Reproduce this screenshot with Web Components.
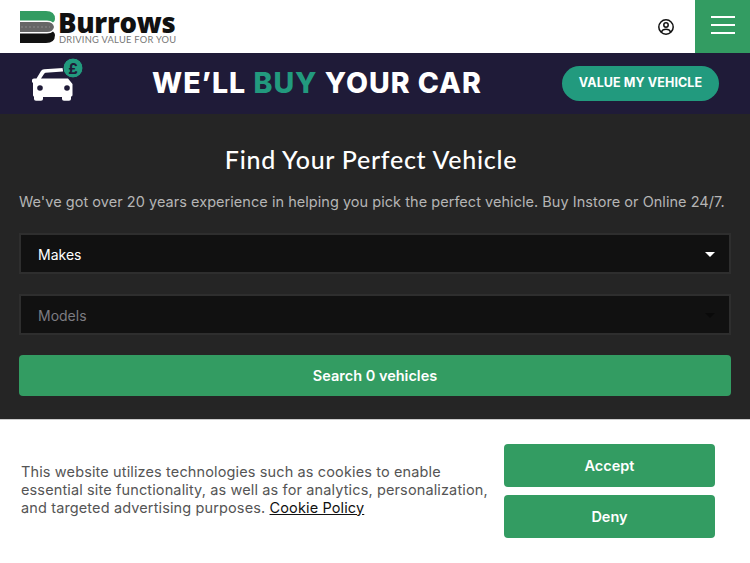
<!DOCTYPE html>
<html lang="en">
<head>
<meta charset="utf-8">
<title>Burrows</title>
<style>
  html, body { margin: 0; padding: 0; height: 100%; overflow: hidden; background: #252525; }
  body { font-family: "Inter", "Liberation Sans", sans-serif; }
  promo-banner b { color: #229a7e; font-weight: inherit; }
</style>
</head>
<body>
<site-header></site-header>
<promo-banner>
  <span>WE’LL <b>BUY</b> YOUR CAR</span>
</promo-banner>
<vehicle-search>
  <h1 slot="title">Find Your Perfect Vehicle</h1>
  <p slot="intro">We've got over 20 years experience in helping you pick the perfect vehicle. Buy Instore or Online 24/7.</p>
  <fake-select>Makes</fake-select>
  <fake-select disabled>Models</fake-select>
  <span slot="button">Search 0 vehicles</span>
</vehicle-search>
<cookie-bar>
  This website utilizes technologies such as cookies to enable essential site functionality, as well as for analytics, personalization, and targeted advertising purposes. <a href="#">Cookie Policy</a>
</cookie-bar>

<script>
class SiteHeader extends HTMLElement {
  constructor() {
    super();
    this.attachShadow({ mode: "open" });
  }
  connectedCallback() {
    this.shadowRoot.innerHTML = `
      <style>
        :host { display: flex; height: 53px; background: #fff; align-items: stretch; }
        .logo { display: flex; gap: 3px; padding: 11px 0 0 20px; flex: 1; }
        .words { display: flex; flex-direction: column; }
        .name { font: 800 27.500px/23px "Open Sans", sans-serif; color: #111; letter-spacing: -0.3px; }
        .tag { font: 400 9.300px/9px "Lato", sans-serif; color: #777; letter-spacing: .27px; margin: 1px 0 0 1px; }
        .user { display: flex; align-items: center; padding-right: 21px; }
        .menu { width: 55px; box-sizing: border-box; padding-bottom: 3px; background: #339c62; display: flex; flex-direction: column; gap: 6px; align-items: center; justify-content: center; }
        .menu i { display: block; width: 24px; height: 2px; background: #fff; }
      </style>
      <div class="logo">
        <svg width="35" height="32" viewBox="0 0 35 32">
          <path d="M0 0H26Q35 0 35 8Q35 10 33 11.500Q31 9.500 27 9.500H0Z" fill="#339c62"/>
          <path d="M0 11H27Q33 11 34 16Q33 21 27 21H0Z" fill="#666"/>
          <path d="M1 16H30" stroke="#8a8a8a" stroke-width="1" stroke-dasharray="2 2"/>
          <path d="M0 22.500H27Q31 22.500 33 20.500Q35 22 35 24Q35 32 26 32H0Z" fill="#111"/>
        </svg>
        <div class="words">
          <span class="name">Burrows</span>
          <span class="tag">DRIVING VALUE FOR YOU</span>
        </div>
      </div>
      <div class="user">
        <svg width="16" height="16" viewBox="0 0 16 16" fill="none" stroke="#111" stroke-width="1.500">
          <circle cx="8" cy="8" r="7.200"/>
          <circle cx="8" cy="6" r="2.200"/>
          <path d="M3.200 13.200Q4.500 10.300 8 10.300T12.800 13.200"/>
        </svg>
      </div>
      <div class="menu"><i></i><i></i><i></i></div>
    `;
  }
}

class PromoBanner extends HTMLElement {
  constructor() {
    super();
    this.attachShadow({ mode: "open" });
  }
  connectedCallback() {
    this.shadowRoot.innerHTML = `
      <style>
        :host { display: flex; height: 61px; background: #1f1b38; align-items: center; color: #fff; }
        .icon { width: 152px; align-self: flex-start; display: flex; padding: 5px 0 0 31px; box-sizing: border-box; }
        .text { flex: 1; font: 800 28.500px/1 "Inter", sans-serif; letter-spacing: 1px; white-space: nowrap; }
        ::slotted(span) { display: block; }
        .cta { width: 157px; height: 35px; margin-right: 31px; border-radius: 18px; background: #229a7e;
               display: flex; align-items: center; justify-content: center;
               font: 700 12.500px/1 "Inter", sans-serif; letter-spacing: .1px; }
      </style>
      <div class="icon">
        <svg width="53" height="44" viewBox="0 0 53 44">
          <path fill="#fff" d="M1 22Q1 20.500 3 20.500H5.500L10 13Q11 11.500 13 11.300L32 10V13.500L14.500 14.800Q13.500 15 13 16L10 20.500H37L41.500 26V37Q41.500 38.500 40 38.500V41Q40 42.700 38 42.700H33Q31 42.700 31 41V39H12V41Q12 42.700 10 42.700H5Q3 42.700 3 41V38.500Q2 38.500 2 37V25L1 24Z"/>
          <circle cx="9" cy="30" r="2.800" fill="#1f1b38"/>
          <circle cx="36" cy="30" r="2.800" fill="#1f1b38"/>
          <circle cx="42" cy="10" r="10" fill="#229a7e" stroke="#1f1b38" stroke-width="1"/>
          <text x="42" y="15.500" text-anchor="middle" font-family="Inter, sans-serif" font-weight="700" font-size="15" fill="#1f1b38">£</text>
        </svg>
      </div>
      <div class="text"><slot></slot></div>
      <div class="cta">VALUE MY VEHICLE</div>
    `;
  }
}

class VehicleSearch extends HTMLElement {
  constructor() {
    super();
    this.attachShadow({ mode: "open" });
  }
  connectedCallback() {
    this.shadowRoot.innerHTML = `
      <style>
        :host { display: block; background: #252525; padding: 28px 19px 0; height: 400px; color: #fff; }
        .stack { display: flex; flex-direction: column; gap: 20px; }
        ::slotted(h1) { margin: 0; padding-right: 8px; text-align: center; font: 500 25px/34px "Lato", sans-serif; letter-spacing: .72px; }
        ::slotted(p) { margin: 15px 0 20px; padding-right: 8px; text-align: center; font: 400 14.500px/22px "Inter", sans-serif; letter-spacing: .04px; color: #b5b5b5; white-space: nowrap; }
        .go { height: 41px; box-sizing: border-box; padding-top: 2px; margin-top: 20px; background: #339c62; border-radius: 4px; display: flex; align-items: center; justify-content: center;
              font: 600 14.500px/1 "Inter", sans-serif; }
      </style>
      <slot name="title"></slot>
      <slot name="intro"></slot>
      <div class="stack"><slot></slot></div>
      <div class="go"><slot name="button"></slot></div>
    `;
  }
}

class FakeSelect extends HTMLElement {
  constructor() {
    super();
    this.attachShadow({ mode: "open" });
  }
  connectedCallback() {
    this.shadowRoot.innerHTML = `
      <style>
        :host { display: flex; height: 41px; box-sizing: border-box; background: #111; border: 2px solid #2e2e2e; align-items: center;
                padding: 2px 14px 0 17px; font: 400 14px/1 "Inter", sans-serif; color: #fff; }
        :host([disabled]) { color: #7d7c82; }
        .t { flex: 1; }
        .arrow { width: 0; height: 0; border: 5px solid transparent; border-top-color: #fff; border-bottom: 0; }
        :host([disabled]) .arrow { border-top-color: #0a0a0a; }
      </style>
      <span class="t"><slot></slot></span>
      <span class="arrow"></span>
    `;
  }
}

class CookieBar extends HTMLElement {
  constructor() {
    super();
    this.attachShadow({ mode: "open" });
  }
  connectedCallback() {
    this.shadowRoot.innerHTML = `
      <style>
        :host { position: fixed; left: 0; right: 0; bottom: 0; height: 144px; background: #fff; box-sizing: border-box; border-top: 1px solid #ccc;
                display: flex; align-items: center; padding: 0 35px 2px 21px; gap: 10px; }
        .msg { flex: 1; margin-bottom: 2px; font: 400 14.500px/18px "Inter", sans-serif; letter-spacing: .13px; color: #555; }
        ::slotted(a) { color: #111; }
        .btns { width: 211px; display: flex; flex-direction: column; gap: 8px; }
        button { height: 43px; padding: 2px 0 0; border: 0; border-radius: 4px; background: #339c62; color: #fff; font: 600 14.500px/1 "Inter", sans-serif; }
      </style>
      <div class="msg"><slot></slot></div>
      <div class="btns"><button>Accept</button><button>Deny</button></div>
    `;
  }
}

customElements.define("site-header", SiteHeader);
customElements.define("promo-banner", PromoBanner);
customElements.define("vehicle-search", VehicleSearch);
customElements.define("fake-select", FakeSelect);
customElements.define("cookie-bar", CookieBar);
</script>
</body>
</html>
